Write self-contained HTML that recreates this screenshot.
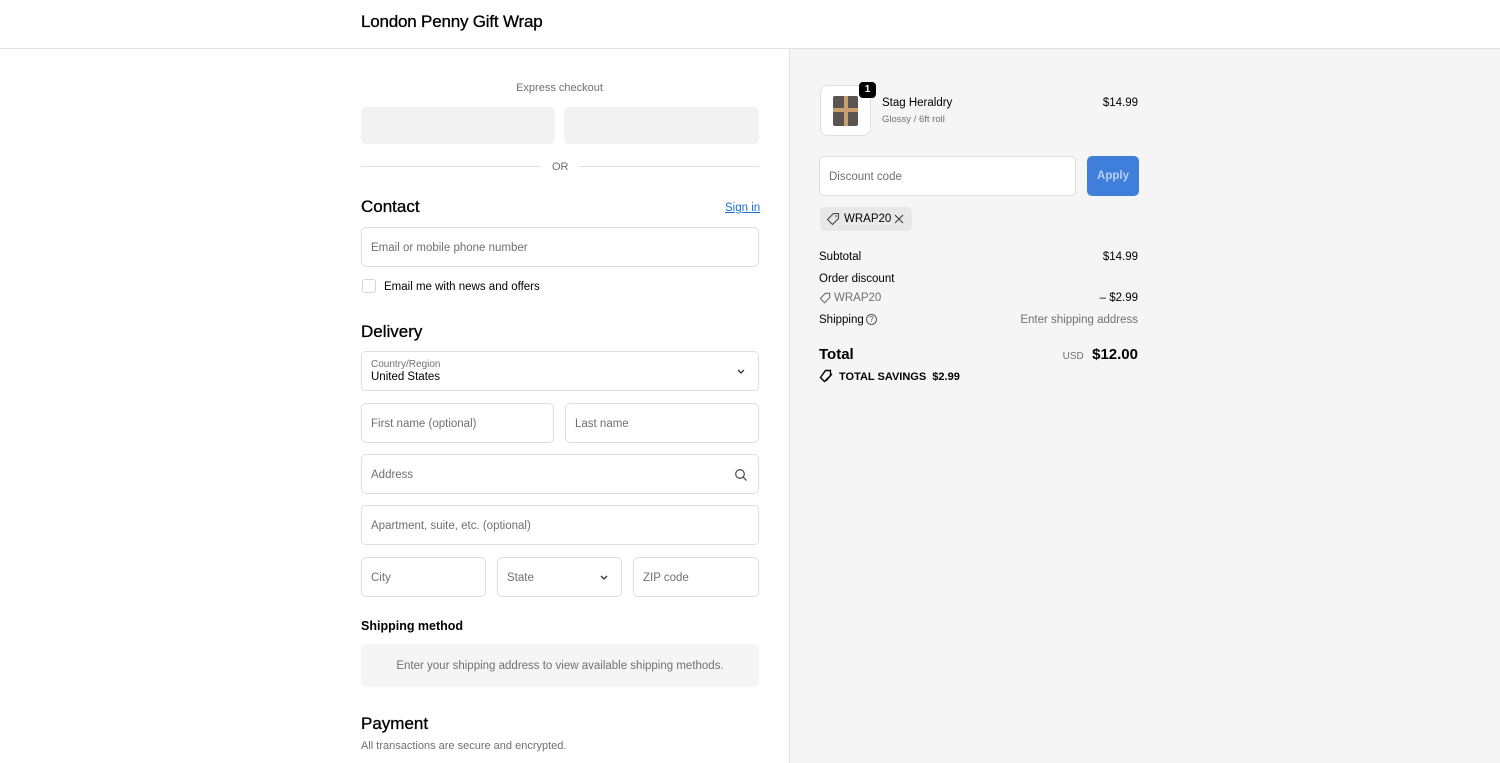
<!DOCTYPE html>
<html><head><meta charset="utf-8"><style>
*{box-sizing:border-box;margin:0;padding:0}
body{width:1500px;height:763px;overflow:hidden;font-family:"Liberation Sans",sans-serif;background:#fff;position:relative;color:#000}
.a{position:absolute}
.inp{position:absolute;border:1px solid #dedede;border-radius:5px;background:#fff;font-size:11.5px;color:#707070;padding-left:9px;padding-top:1px;display:flex;align-items:center}
.t{font-size:11.5px;color:#000}
.g{color:#707070}
.r{position:absolute;right:362px;text-align:right}
h2{position:absolute;font-size:17px;font-weight:normal;-webkit-text-stroke:0.3px #000}
</style></head><body>
<h2 style="left:361px;top:12px;letter-spacing:-0.2px">London Penny Gift Wrap</h2>
<div class="a" style="left:0;top:48px;width:1500px;border-top:1px solid #e1e1e1"></div>
<div class="a" style="left:789px;top:49px;width:711px;height:714px;background:#f5f5f5;border-left:1px solid #e1e1e1"></div>

<div class="a g" style="left:361px;width:397px;top:82px;text-align:center;font-size:11px">Express checkout</div>
<div class="a" style="left:361px;top:107px;width:194px;height:37px;background:#f2f2f2;border-radius:5px"></div>
<div class="a" style="left:564px;top:107px;width:195px;height:37px;background:#f2f2f2;border-radius:5px"></div>
<div class="a" style="left:361px;top:166px;width:180px;border-top:1px solid #e1e1e1"></div>
<div class="a" style="left:578px;top:166px;width:181px;border-top:1px solid #e1e1e1"></div>
<div class="a g" style="left:552px;top:161px;font-size:11px">OR</div>

<h2 style="left:361px;top:197px">Contact</h2>
<div class="a" style="left:725px;top:202px;font-size:11.5px;color:#1a6fd0;text-decoration:underline">Sign in</div>
<div class="inp" style="left:361px;top:227px;width:398px;height:40px">Email or mobile phone number</div>
<div class="a" style="left:362px;top:279px;width:14px;height:14px;border:1px solid #d6d6d6;border-radius:3px"></div>
<div class="a t" style="left:384px;top:281px">Email me with news and offers</div>

<h2 style="left:361px;top:322px">Delivery</h2>
<div class="inp" style="left:361px;top:351px;width:398px;height:40px;display:block;padding-top:7px">
<div style="font-size:10px;color:#707070">Country/Region</div><div style="font-size:11.5px;color:#000;margin-top:1px">United States</div>
<svg class="a" style="right:12px;top:16px" width="10" height="8" viewBox="0 0 10 8"><path d="M2 2l3 3 3-3" fill="none" stroke="#333" stroke-width="1.3"/></svg></div>
<div class="inp" style="left:361px;top:403px;width:193px;height:40px">First name (optional)</div>
<div class="inp" style="left:565px;top:403px;width:194px;height:40px">Last name</div>
<div class="inp" style="left:361px;top:454px;width:398px;height:40px">Address
<svg class="a" style="right:10px;top:13px" width="14" height="14" viewBox="0 0 14 14"><circle cx="6" cy="6" r="4.3" fill="none" stroke="#555" stroke-width="1.3"/><path d="M9.2 9.2l3.3 3.3" stroke="#555" stroke-width="1.3"/></svg></div>
<div class="inp" style="left:361px;top:505px;width:398px;height:40px">Apartment, suite, etc. (optional)</div>
<div class="inp" style="left:361px;top:557px;width:125px;height:40px">City</div>
<div class="inp" style="left:497px;top:557px;width:125px;height:40px">State
<svg class="a" style="right:12px;top:16px" width="10" height="8" viewBox="0 0 10 8"><path d="M2 2l3 3 3-3" fill="none" stroke="#333" stroke-width="1.3"/></svg></div>
<div class="inp" style="left:633px;top:557px;width:126px;height:40px">ZIP code</div>

<div class="a" style="left:361px;top:619px;font-size:12.5px;font-weight:bold">Shipping method</div>
<div class="a g" style="left:361px;top:644px;width:398px;height:43px;background:#f5f5f5;border-radius:5px;font-size:11.5px;text-align:center;line-height:44px">Enter your shipping address to view available shipping methods.</div>
<h2 style="left:361px;top:714px">Payment</h2>
<div class="a g" style="left:361px;top:740px;font-size:11px">All transactions are secure and encrypted.</div>

<!-- right -->
<div class="a" style="left:820px;top:85px;width:51px;height:51px;border:1px solid #ddd;border-radius:8px;background:#fff;overflow:hidden">
<div class="a" style="left:12px;top:10px;width:25px;height:30px;background:#5a5550;border-radius:2px"></div>
<div class="a" style="left:23px;top:10px;width:4px;height:30px;background:#c8a070"></div>
<div class="a" style="left:12px;top:22px;width:25px;height:4px;background:#c8a070"></div></div>
<div class="a" style="left:859px;top:82px;width:17px;height:16px;background:#000;color:#fff;border-radius:4px;font-size:10px;font-weight:bold;text-align:center;line-height:16px">1</div>
<div class="a t" style="left:882px;top:97px">Stag Heraldry</div>
<div class="a g" style="left:882px;top:114px;font-size:9.5px">Glossy / 6ft roll</div>
<div class="r t" style="top:97px">$14.99</div>
<div class="inp" style="left:819px;top:156px;width:257px;height:40px">Discount code</div>
<div class="a" style="left:1087px;top:156px;width:52px;height:40px;background:#3f7fdb;border-radius:5px;color:#b8cff2;font-size:11.5px;font-weight:bold;text-align:center;line-height:41px">Apply</div>
<div class="a" style="left:820px;top:207px;width:92px;height:24px;background:#e8e8e8;border-radius:5px"></div>
<svg class="a" style="left:826px;top:212px" width="14" height="14" viewBox="0 0 14 14"><path d="M7.5 1.5h5v5l-6 6-5-5z" fill="none" stroke="#444" stroke-width="1.1"/><circle cx="10" cy="4" r="0.9" fill="#444"/></svg>
<div class="a t" style="left:844px;top:213px">WRAP20</div>
<svg class="a" style="left:894px;top:214px" width="10" height="10" viewBox="0 0 10 10"><path d="M1 1l8 8M9 1l-8 8" stroke="#444" stroke-width="1.2"/></svg>

<div class="a t" style="left:819px;top:251px">Subtotal</div>
<div class="r t" style="top:251px">$14.99</div>
<div class="a t" style="left:819px;top:273px">Order discount</div>
<svg class="a" style="left:819px;top:292px" width="12" height="12" viewBox="0 0 14 14"><path d="M7.5 1.5h5v5l-6 6-5-5z" fill="none" stroke="#666" stroke-width="1.2"/></svg>
<div class="a t" style="left:834px;top:292px;color:#707070">WRAP20</div>
<div class="r t" style="top:292px">– $2.99</div>
<div class="a t" style="left:819px;top:314px">Shipping</div>
<div class="a" style="left:866px;top:314px;width:11px;height:11px;border:1px solid #555;border-radius:50%;font-size:8px;text-align:center;line-height:9px;color:#555">?</div>
<div class="r t" style="top:314px;color:#707070">Enter shipping address</div>
<div class="a" style="left:819px;top:346px;font-size:15px;font-weight:bold">Total</div>
<div class="r" style="top:346px;font-size:15px;font-weight:bold"><span style="font-size:10px;font-weight:normal;color:#707070">USD</span>&nbsp; $12.00</div>
<svg class="a" style="left:819px;top:369px" width="14" height="14" viewBox="0 0 14 14"><path d="M6.5 1.5h5v5l-6 6-4-4z" fill="none" stroke="#000" stroke-width="1.4"/><path d="M13 5l-6 7" stroke="#000" stroke-width="1.2"/></svg>
<div class="a" style="left:839px;top:371px;font-size:11px;font-weight:bold">TOTAL SAVINGS&nbsp; $2.99</div>
</body></html>
